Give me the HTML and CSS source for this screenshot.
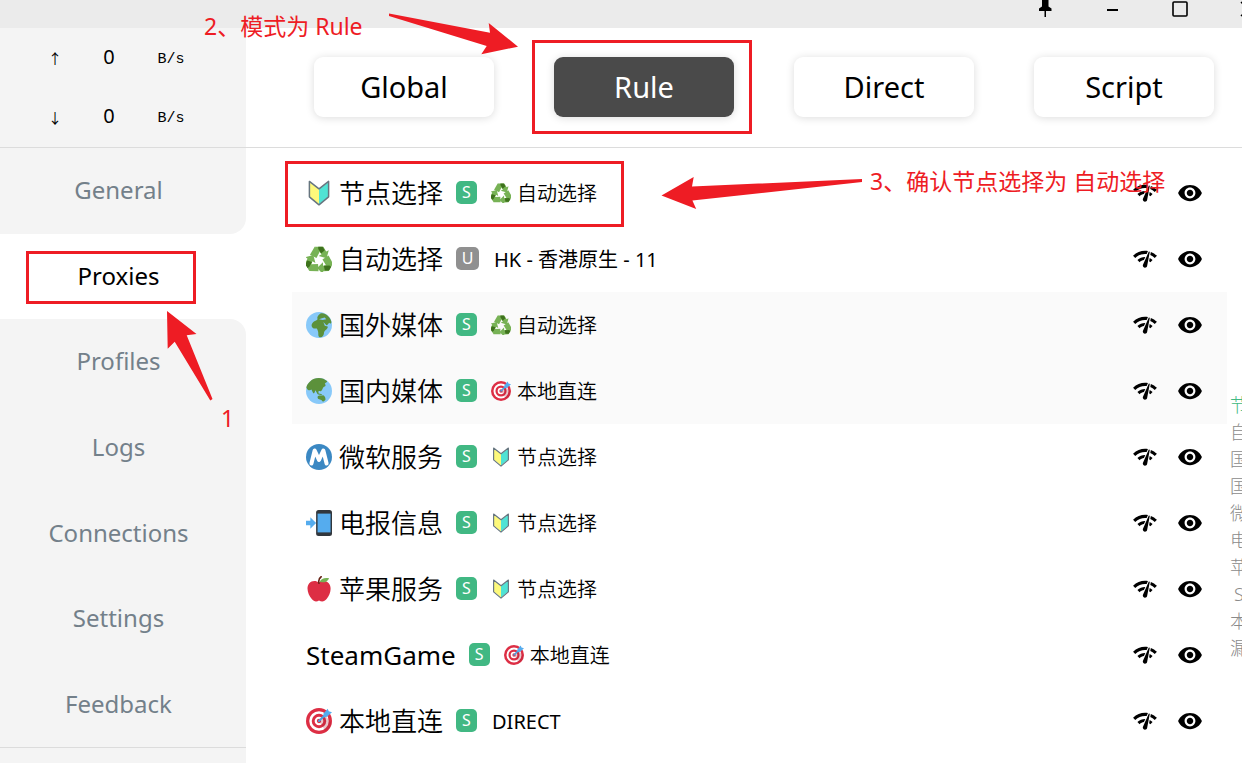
FILE: index.html
```html
<!DOCTYPE html>
<html lang="zh-CN">
<head>
<meta charset="utf-8">
<title>Proxies</title>
<link rel="stylesheet" href="styles.css">
</head>
<body>
<svg class="sprite" aria-hidden="true">
  <symbol id="shield" viewBox="0 0 26 26">
    <path d="M3.4 2.2 13 9v15.2L3.4 16.4z" fill="#fdf97b"/>
    <path d="M22.6 2.2 13 9v15.2l9.600-7.800z" fill="#50e3d4"/>
    <path d="M3.400 1.400 13 8.800l9.600-7.400v15.400L13 24.800l-9.600-8z" fill="none" stroke="#66757f" stroke-width="1.500" stroke-linejoin="round"/>
  </symbol>
  <symbol id="recycle" viewBox="0 0 36 36">
    <g id="loop">
      <path d="M12 1h12l4 6.500 3.500-1.500-3 11-11-3 4-2.500L17 6z" fill="#77b255"/>
      <path d="m12 1 6 3 1 4-4.500 8.500L5.500 12z" fill="#77b255"/>
      <path d="m17 1 6 0 3 5-5 4.500-4-6.500z" fill="#3e721d"/>
    </g>
    <use href="#loop" transform="rotate(120 18 20)"/>
    <use href="#loop" transform="rotate(240 18 20)"/>
  </symbol>
  <symbol id="globe-africa" viewBox="0 0 36 36">
    <circle cx="18" cy="18" r="18" fill="#88c9f9"/>
    <path d="M20 2c6-2 13 4 15 11 .5 3-1 4-3 2-1 2-3 4-4 3l-4-4 2 5 4 1c1 3-4 5-5 8 0 4-2 7-5 7-3 0-3-3-3-6 0-2-1-4-2-6-3 0-6 0-7-3s1-5 3-7c2-1 4-1 5-3-1-3 0-5 4-8z" fill="#5c913b"/>
    <path d="m18 10 5 1 5-1-2-2.500-4 1z" fill="#88c9f9"/>
  </symbol>
  <symbol id="globe-asia" viewBox="0 0 36 36">
    <circle cx="18" cy="18" r="18" fill="#88c9f9"/>
    <path d="M6 4.500C10 0 18-1 24 1l5 3c1 2-2 2-3 4 2 2 1 4-1 4-2 1-2 4-4 6-2 1-3-1-4 1 1 3 0 4-1 3l-3-5c-1 2-1 5-3 4L7.500 16C5 18 2 17 .5 13 1 10 3 7 6 4.500z" fill="#5c913b"/>
    <path d="M16 26c2-3 5-1 8-2 2 1 3 3 3 6-2 2-4 4-5 1-2-2-6 0-6-5zM16 21l5 1 2 2-6-1z" fill="#5c913b"/>
  </symbol>
  <symbol id="metro" viewBox="0 0 36 36">
    <circle cx="18" cy="18" r="18" fill="#3b88c3"/>
    <path d="M7.500 27 12 9l6 13 6-13 4.500 18" fill="none" stroke="#fff" stroke-width="5.600" stroke-linecap="round" stroke-linejoin="round"/>
  </symbol>
  <symbol id="phone" viewBox="0 0 36 36">
    <rect x="14" y="0" width="22" height="36" rx="3.500" fill="#31373d"/>
    <path d="M16 5h18v26H16z" fill="#55acee"/>
    <path d="M0 15h6v-5l8 8-8 8v-5H0z" fill="#55acee"/>
  </symbol>
  <symbol id="apple" viewBox="0 0 36 36">
    <path d="M18 9c4-3 10-3 13.500 1 5 6 2 16-3 22-3 4-7 4-10.500 2-3 2-7 2-10-2C3 26-.5 16 4.500 10 8 6 14 6 18 9z" fill="#dd2e44"/>
    <path d="M18 10c-1-4 0-7 3-9" fill="none" stroke="#662113" stroke-width="2.200" stroke-linecap="round"/>
    <path d="M19 8c2-5 7-6 13-5-2 5-7 7-13 5z" fill="#77b255"/>
  </symbol>
  <symbol id="target" viewBox="0 0 36 36">
    <circle cx="18" cy="18" r="18" fill="#dd2e44"/>
    <circle cx="18" cy="18" r="13.500" fill="#fff"/>
    <circle cx="18" cy="18" r="10" fill="#dd2e44"/>
    <circle cx="18" cy="18" r="6" fill="#fff"/>
    <circle cx="18" cy="18" r="3" fill="#dd2e44"/>
    <path d="m18 18 9 14 6-4 2-8-8-9z" fill="#a01c2f" opacity=".25"/>
    <path d="M18 18 29 7" stroke="#4a9fe0" stroke-width="2.800" stroke-linecap="round"/>
    <path d="m24 8 6-7 1.500 3.500L36 6l-7 6-4 1z" fill="#55acee"/>
  </symbol>
  <symbol id="speed" viewBox="0 0 24 24">
    <path d="M15.9 5c-.17 0-.32.09-.41.23l-.07.15-5.18 11.65c-.16.29-.26.61-.26.96 0 1.11.9 2.01 2.010 2.010.96 0 1.770-.68 1.960-1.590l.01-.03L16.400 5.500c0-.28-.22-.5-.5-.5zM1 9l2 2c2.880-2.880 6.790-4.080 10.530-3.620l1.190-2.680C9.890 3.840 4.740 5.270 1 9zm20 2 2-2c-1.640-1.640-3.550-2.820-5.590-3.570l-.53 2.820c1.500.62 2.900 1.530 4.120 2.750zm-4 4 2-2c-.8-.8-1.700-1.420-2.660-1.890l-.55 2.920c.42.27.83.59 1.210.97zM5 13l2 2c1.130-1.130 2.560-1.790 4.030-2l1.280-2.880c-2.630-.08-5.300.87-7.310 2.880z"/>
  </symbol>
  <symbol id="eye" viewBox="0 0 24 24">
    <path d="M12 4.500C7 4.500 2.730 7.610 1 12c1.730 4.390 6 7.500 11 7.500s9.270-3.110 11-7.500c-1.730-4.390-6-7.500-11-7.500zM12 17c-2.760 0-5-2.240-5-5s2.240-5 5-5 5 2.240 5 5-2.240 5-5 5zm0-8c-1.660 0-3 1.340-3 3s1.340 3 3 3 3-1.340 3-3-1.340-3-3-3z"/>
  </symbol>
</svg>

<div class="window">
  <header class="titlebar">
    <button aria-label="Pin"><svg width="16" height="20" viewBox="0 0 16 20"><path d="M3 0h10v2h-1.500v6.500l3 2V13H9v6H7.500v-6H2v-2.500l3-2V2H3z"/></svg></button>
    <button aria-label="Minimize"><svg width="16" height="20" viewBox="0 0 16 20"><path d="M3 11h11v2H3z"/></svg></button>
    <button aria-label="Maximize"><svg width="16" height="20" viewBox="0 0 16 20"><rect x="1" y="4" width="14" height="14" rx="1" fill="none" stroke="#000" stroke-width="1.600"/></svg></button>
    <button aria-label="Close"><svg width="16" height="20" viewBox="0 0 16 20"><path d="m1 4 14 14M15 4 1 18" stroke="#000" stroke-width="1.500"/></svg></button>
  </header>

  <div class="body">
    <aside class="sidebar">
      <div class="traffic">
        <span class="dir">↑</span><span class="rate">0</span><span class="unit">B/s</span>
        <span class="dir">↓</span><span class="rate">0</span><span class="unit">B/s</span>
      </div>
      <nav class="menu">
        <a href="#general" class="before-active">General</a>
        <a href="#proxies" class="active">Proxies</a>
        <a href="#profiles" class="after-active">Profiles</a>
        <a href="#logs">Logs</a>
        <a href="#connections">Connections</a>
        <a href="#settings">Settings</a>
        <a href="#feedback">Feedback</a>
      </nav>
      <div class="sidebar-foot"></div>
    </aside>

    <main class="main">
      <div class="modes">
        <button class="mode">Global</button>
        <button class="mode selected">Rule</button>
        <button class="mode">Direct</button>
        <button class="mode">Script</button>
      </div>
      <div class="content">
        <ul class="groups">
          <li class="group">
            <svg class="emoji"><use href="#shield"/></svg><span class="name">节点选择</span><span class="badge">S</span>
            <svg class="emoji-small"><use href="#recycle"/></svg><span class="current">自动选择</span>
            <span class="actions"><button aria-label="Test"><svg><use href="#speed"/></svg></button><button aria-label="Show"><svg><use href="#eye"/></svg></button></span>
          </li>
          <li class="group">
            <svg class="emoji"><use href="#recycle"/></svg><span class="name">自动选择</span><span class="badge auto">U</span>
            <span class="current plain">HK - 香港原生 - 11</span>
            <span class="actions"><button aria-label="Test"><svg><use href="#speed"/></svg></button><button aria-label="Show"><svg><use href="#eye"/></svg></button></span>
          </li>
          <li class="group shaded">
            <svg class="emoji"><use href="#globe-africa"/></svg><span class="name">国外媒体</span><span class="badge">S</span>
            <svg class="emoji-small"><use href="#recycle"/></svg><span class="current">自动选择</span>
            <span class="actions"><button aria-label="Test"><svg><use href="#speed"/></svg></button><button aria-label="Show"><svg><use href="#eye"/></svg></button></span>
          </li>
          <li class="group shaded">
            <svg class="emoji"><use href="#globe-asia"/></svg><span class="name">国内媒体</span><span class="badge">S</span>
            <svg class="emoji-small"><use href="#target"/></svg><span class="current">本地直连</span>
            <span class="actions"><button aria-label="Test"><svg><use href="#speed"/></svg></button><button aria-label="Show"><svg><use href="#eye"/></svg></button></span>
          </li>
          <li class="group">
            <svg class="emoji"><use href="#metro"/></svg><span class="name">微软服务</span><span class="badge">S</span>
            <svg class="emoji-small"><use href="#shield"/></svg><span class="current">节点选择</span>
            <span class="actions"><button aria-label="Test"><svg><use href="#speed"/></svg></button><button aria-label="Show"><svg><use href="#eye"/></svg></button></span>
          </li>
          <li class="group">
            <svg class="emoji"><use href="#phone"/></svg><span class="name">电报信息</span><span class="badge">S</span>
            <svg class="emoji-small"><use href="#shield"/></svg><span class="current">节点选择</span>
            <span class="actions"><button aria-label="Test"><svg><use href="#speed"/></svg></button><button aria-label="Show"><svg><use href="#eye"/></svg></button></span>
          </li>
          <li class="group">
            <svg class="emoji"><use href="#apple"/></svg><span class="name">苹果服务</span><span class="badge">S</span>
            <svg class="emoji-small"><use href="#shield"/></svg><span class="current">节点选择</span>
            <span class="actions"><button aria-label="Test"><svg><use href="#speed"/></svg></button><button aria-label="Show"><svg><use href="#eye"/></svg></button></span>
          </li>
          <li class="group">
            <span class="name plain">SteamGame</span><span class="badge">S</span>
            <svg class="emoji-small"><use href="#target"/></svg><span class="current">本地直连</span>
            <span class="actions"><button aria-label="Test"><svg><use href="#speed"/></svg></button><button aria-label="Show"><svg><use href="#eye"/></svg></button></span>
          </li>
          <li class="group">
            <svg class="emoji"><use href="#target"/></svg><span class="name">本地直连</span><span class="badge">S</span>
            <span class="current plain">DIRECT</span>
            <span class="actions"><button aria-label="Test"><svg><use href="#speed"/></svg></button><button aria-label="Show"><svg><use href="#eye"/></svg></button></span>
          </li>
        </ul>
        <ol class="index">
          <li class="here">节</li><li>自</li><li>国</li><li>国</li><li>微</li><li>电</li><li>苹</li><li class="latin">S</li><li>本</li><li>漏</li>
        </ol>
      </div>
    </main>
  </div>

  <div class="notes">
    <svg class="arrows" width="1242" height="763" viewBox="0 0 1242 763" aria-hidden="true">
      <path d="M389 13.500 490 32.700 488.700 23 518 46.700 481.300 54.300 486.700 46 389 16z"/>
      <path d="M862 179 692 186.500 693.700 177 661.500 195.500 696.200 209 692.400 200.500 862 182z"/>
      <path d="M167 311 196.500 334 186.700 335.300 212.500 399 210.300 400.500 174.700 341.700 167.700 348.700z"/>
    </svg>
    <div class="frame frame-mode"></div>
    <div class="frame frame-group"></div>
    <div class="frame frame-menu"></div>
    <p class="note note-menu">1</p>
    <p class="note note-mode">2、模式为 Rule</p>
    <p class="note note-group">3、确认节点选择为 自动选择</p>
  </div>
</div>
</body>
</html>
```

FILE: styles.css
```css
* { box-sizing: border-box; }

body {
  margin: 0;
  background: #fff;
  color: #000;
  font-family: "Noto Sans", "Noto Sans CJK SC", sans-serif;
}

ul, ol, p { margin: 0; padding: 0; list-style: none; }

button {
  padding: 0;
  border: 0;
  background: none;
  color: inherit;
  font: inherit;
}

.sprite { position: absolute; width: 0; height: 0; }

.window {
  position: relative;
  display: flex;
  flex-direction: column;
  min-height: 100vh;
  overflow: hidden;
}

.titlebar {
  display: flex;
  justify-content: flex-end;
  height: 28px;
  margin-right: -40px;
  background: #ebebeb;
}
.titlebar button { display: flex; justify-content: center; width: 68px; height: 28px; }
.titlebar button:first-child { margin-right: -1px; }
.titlebar svg { display: block; margin-top: -2px; }

.body { flex: 1; display: flex; }

.sidebar {
  display: flex;
  flex-direction: column;
  width: 246px;
  flex: none;
  background: #fff;
}
.traffic {
  display: grid;
  grid-template-columns: 54px 54px 70px;
  grid-auto-rows: 59px;
  height: 120px;
  padding-left: 28px;
  align-items: center;
  text-align: center;
  background: #f4f4f4;
  border-bottom: 1px solid #dcdcdc;
}
.dir { font: 14px "Noto Sans CJK SC", sans-serif; }
.rate { font-size: 20px; line-height: 26px; padding-bottom: 2px; }
.unit { padding-top: 4px; font: 15px "Liberation Mono", monospace; }

.menu { flex: 1; display: flex; flex-direction: column; }
.menu a {
  flex: 1;
  display: flex;
  align-items: center;
  justify-content: center;
  padding: 0 9px 2px 0;
  background: #f4f4f4;
  color: #73808a;
  font-size: 24px;
  text-decoration: none;
}
.menu .active { background: #fff; color: #000; }
.menu .before-active { border-bottom-right-radius: 16px; }
.menu .after-active { border-top-right-radius: 16px; }
.sidebar-foot { height: 16px; background: #f4f4f4; border-top: 1px solid #dcdcdc; }

.main { flex: 1; min-width: 0; }
.modes {
  display: flex;
  justify-content: space-between;
  align-items: center;
  height: 120px;
  padding: 0 28px 2px 68px;
  border-bottom: 1px solid #dcdcdc;
}
.mode {
  width: 180px;
  height: 60px;
  border-radius: 9px;
  background: #fff;
  box-shadow: 0 1px 8px rgba(0, 0, 0, .14);
  font-size: 29px;
}
.mode.selected { background: #4a4a4a; color: #fff; }

.content { display: flex; padding: 12px 0 0 46px; }
.groups { flex: 1; }
.group {
  display: flex;
  align-items: center;
  height: 66px;
  padding: 0 24px 1px 14px;
}
.shaded { background: #fafafa; }
.emoji { width: 26px; height: 26px; margin-right: 7px; }
.emoji-small { width: 20px; height: 20px; margin-left: 14px; margin-right: -9px; }
.name { font-size: 26px; font-weight: 350; line-height: 36px; }
.badge {
  width: 21px;
  height: 23px;
  margin-left: 13px;
  border-radius: 5px;
  background: #41b883;
  color: #fff;
  font-size: 16px;
  line-height: 23px;
  text-align: center;
}
.badge.auto { width: 23px; background: #909090; }
.current { margin-left: 15px; padding-top: 2px; font-size: 20px; font-weight: 350; line-height: 28px; }
.plain { font-weight: 400; }
.actions { display: flex; gap: 19px; margin-left: auto; }
.actions svg { display: block; width: 26px; height: 26px; }

.index {
  width: 15px;
  padding-left: 3px;
  margin-top: 232px;
  overflow: hidden;
  color: #8a8a8a;
  font-size: 18px;
  font-weight: 300;
  line-height: 27px;
}
.index .here { color: #41b883; }
.index .latin { padding-left: 4px; }

.notes { position: absolute; inset: 0; pointer-events: none; color: #ee1c24; }
.arrows { position: absolute; left: 0; top: 0; fill: #ee1c24; }
.frame { position: absolute; border: 3px solid #ee1c24; }
.frame-mode { left: 532px; top: 40px; width: 220px; height: 94px; }
.frame-group { left: 285px; top: 161px; width: 339px; height: 66px; }
.frame-menu { left: 26px; top: 251px; width: 170px; height: 53px; }
.note { position: absolute; font-size: 23px; line-height: 32px; white-space: nowrap; }
.note-menu { left: 221px; top: 402px; }
.note-mode { left: 204px; top: 10px; }
.note-group { left: 870px; top: 165px; }
```
